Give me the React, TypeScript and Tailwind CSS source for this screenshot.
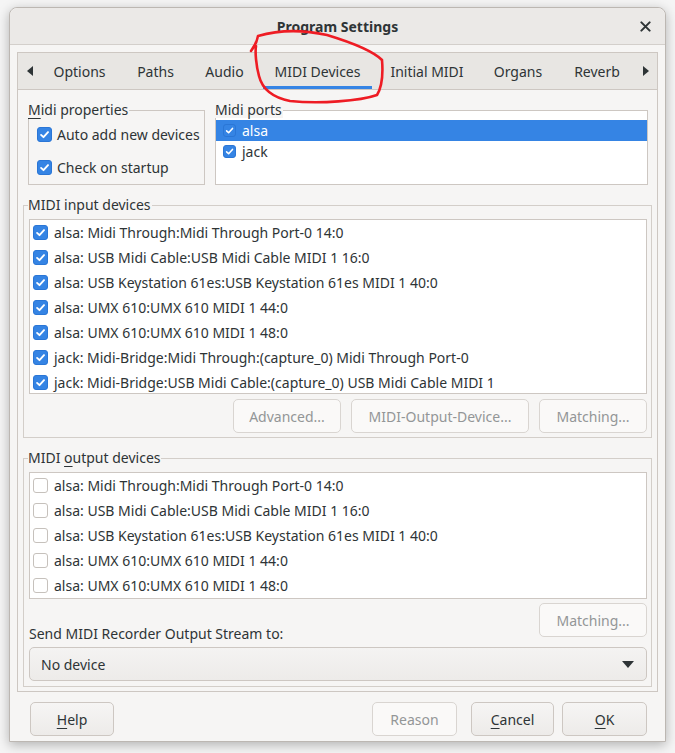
import React from "react";

const inputDevices = [
  "alsa: Midi Through:Midi Through Port-0 14:0",
  "alsa: USB Midi Cable:USB Midi Cable MIDI 1 16:0",
  "alsa: USB Keystation 61es:USB Keystation 61es MIDI 1 40:0",
  "alsa: UMX 610:UMX 610 MIDI 1 44:0",
  "alsa: UMX 610:UMX 610 MIDI 1 48:0",
  "jack: Midi-Bridge:Midi Through:(capture_0) Midi Through Port-0",
  "jack: Midi-Bridge:USB Midi Cable:(capture_0) USB Midi Cable MIDI 1",
];

const outputDevices = inputDevices.slice(0, 5);

const tabs = [
  { label: "Options", w: "w-[75px]" },
  { label: "Paths", w: "w-[61px]" },
  { label: "Audio", w: "w-[61px]" },
  { label: "MIDI Devices", w: "w-[109px]", active: true },
  { label: "Initial MIDI", w: "w-[94px]" },
  { label: "Organs", w: "w-[72px]" },
  { label: "Reverb", w: "w-[70px]" },
];

const Check: React.FC<{ on: boolean; small?: boolean }> = ({ on, small }) => {
  const size = small ? "w-[13px] h-[13px]" : "w-[15px] h-[15px]";
  if (!on) {
    return <span className={`${size} shrink-0 rounded-[3px] border border-[#c6c1bc] bg-white`} />;
  }
  return (
    <span className={`${size} shrink-0 rounded-[3px] bg-[#3584e4] border border-[#2a76d6] flex items-center justify-center`}>
      <svg viewBox="0 0 14 14" className="w-full h-full">
        <path d="M3.3 7.4 L5.9 9.9 L10.8 4.4" fill="none" stroke="white" strokeWidth="2" strokeLinecap="round" strokeLinejoin="round" />
      </svg>
    </span>
  );
};

const GroupTitle: React.FC<{ children: React.ReactNode }> = ({ children }) => (
  <div className="-mt-[9px] -ml-px flex h-[16px]">
    <span className="bg-[#f6f5f4] pr-px leading-[16px]">{children}</span>
  </div>
);

const Btn: React.FC<{ children: React.ReactNode; w: string; disabled?: boolean }> = ({ children, w, disabled }) => (
  <div
    className={`${w} h-[34px] shrink-0 rounded-[5px] border flex items-center justify-center ${
      disabled
        ? "border-[#d9d5d1] bg-[#faf9f8] text-[#939697]"
        : "border-[#cdc7c2] bg-gradient-to-b from-[#f6f5f4] to-[#edebe9] text-[#2e3436]"
    }`}
  >
    {children}
  </div>
);

const DeviceList: React.FC<{ items: string[]; checked: boolean; h: string }> = ({ items, checked, h }) => (
  <div className={`${h} border border-[#cdc7c2] bg-white overflow-hidden`}>
    {items.map((d) => (
      <div key={d} className="h-[25px] flex items-center gap-[6px] pl-[3px] whitespace-nowrap">
        <Check on={checked} />
        <span>{d}</span>
      </div>
    ))}
  </div>
);

export default function App() {
  return (
    <div
      className="w-[675px] h-[753px] bg-[#f5f5f5] overflow-hidden relative text-[14px] text-[#2e3436]"
      style={{ fontFamily: '"Noto Sans", "DejaVu Sans", sans-serif' }}
    >
      <div className="ml-[9px] mt-[7px] w-[657px] h-[735px] flex flex-col bg-[#f6f5f4] rounded-t-[8px] border border-[#bcb7b2] shadow-[0_3px_12px_rgba(0,0,0,0.28)]">
        {/* title bar */}
        <div className="h-[37px] shrink-0 rounded-t-[8px] bg-[#ebe9e7] border-b border-[#d3cfcb] flex items-center">
          <div className="w-[38px]" />
          <div className="flex-1 text-center font-bold text-[14px] leading-[20px] pt-[1px]">Program Settings</div>
          <div className="w-[38px] flex items-center justify-center">
            <svg viewBox="0 0 12 12" className="w-[11px] h-[11px] mr-[1px]">
              <path d="M1.5 1.5 L10.5 10.5 M10.5 1.5 L1.5 10.5" stroke="#2e3436" strokeWidth="2.2" strokeLinecap="round" />
            </svg>
          </div>
        </div>

        <div className="flex-1 px-[7px] pt-[7px] flex flex-col">
          {/* tab frame */}
          <div className="h-[640px] shrink-0 border border-[#cdc7c2] flex flex-col">
            <div className="h-[37px] shrink-0 bg-[#e8e6e3] border-b border-[#cdc7c2] flex">
              <div className="w-[24px] flex items-center justify-center">
                <svg viewBox="0 0 6 10" className="w-[6px] h-[10px]">
                  <path d="M6 0 L0 5 L6 10 Z" fill="#2e3436" />
                </svg>
              </div>
              <div className="flex gap-[8px]">
                {tabs.map((t) => (
                  <div
                    key={t.label}
                    className={`${t.w} h-[36px] flex items-center justify-center whitespace-nowrap ${
                      t.active ? "border-b-[3px] border-[#3584e4] pt-[3px]" : ""
                    }`}
                  >
                    {t.label}
                  </div>
                ))}
              </div>
              <div className="flex-1 flex items-center justify-center pl-[2px]">
                <svg viewBox="0 0 6 10" className="w-[6px] h-[10px]">
                  <path d="M0 0 L6 5 L0 10 Z" fill="#2e3436" />
                </svg>
              </div>
            </div>

            {/* page */}
            <div className="flex-1 px-[5px]">
              <div className="flex ml-[5px] mt-[20px]">
                <div className="w-[177px] h-[75px] border border-[#cdc7c2]">
                  <GroupTitle>
                    <span className="underline underline-offset-[3px]">M</span>idi properties
                  </GroupTitle>
                  <div className="h-[33px] flex items-center gap-[5px] pl-[8px]">
                    <Check on />
                    <span>Auto add new devices</span>
                  </div>
                  <div className="h-[32px] flex items-center gap-[5px] pl-[8px]">
                    <Check on />
                    <span>Check on startup</span>
                  </div>
                </div>
                <div className="ml-[10px] w-[433px] h-[75px] border border-[#cdc7c2] bg-white">
                  <GroupTitle>Midi ports</GroupTitle>
                  <div className="mt-[2px]">
                    <div className="h-[21px] flex items-center gap-[6px] pl-[7px] bg-[#3584e4] text-white">
                      <Check on small />
                      <span>alsa</span>
                    </div>
                    <div className="h-[21px] flex items-center gap-[6px] pl-[7px]">
                      <Check on small />
                      <span>jack</span>
                    </div>
                  </div>
                </div>
              </div>

              {/* MIDI input devices */}
              <div className="mt-[20px] border border-[#d3cec9] pl-[5px] pr-[4px] pb-[4px]">
                <GroupTitle>MIDI input devices</GroupTitle>
                <div className="mt-[6px]">
                  <DeviceList items={inputDevices} checked h="h-[175px]" />
                </div>
                <div className="mt-[5px] flex justify-end gap-[10px]">
                  <Btn w="w-[108px]" disabled>Advanced...</Btn>
                  <Btn w="w-[178px]" disabled>MIDI-Output-Device...</Btn>
                  <Btn w="w-[108px]" disabled>Matching...</Btn>
                </div>
              </div>

              {/* MIDI output devices */}
              <div className="mt-[20px] border border-[#d3cec9] pl-[5px] pr-[4px] pb-[5px]">
                <GroupTitle>
                  MIDI <span className="underline underline-offset-[3px]">o</span>utput devices
                </GroupTitle>
                <div className="mt-[6px]">
                  <DeviceList items={outputDevices} checked={false} h="h-[127px]" />
                </div>
                <div className="mt-[4px] flex justify-between items-start">
                  <span className="mt-[21px] leading-[20px]">Send MIDI Recorder Output Stream to:</span>
                  <Btn w="w-[108px]" disabled>Matching...</Btn>
                </div>
                <div className="mt-[3px] h-[34px] rounded-[5px] border border-[#cdc7c2] bg-gradient-to-b from-[#f4f3f2] to-[#edebe9] flex items-center pl-[11px] pr-[12px]">
                  <span className="flex-1">No device</span>
                  <svg viewBox="0 0 12 7" className="w-[12px] h-[7px]">
                    <path d="M0 0 L12 0 L6 7 Z" fill="#2e3436" />
                  </svg>
                </div>
              </div>
            </div>
          </div>

          {/* dialog buttons */}
          <div className="mt-[10px] flex">
            <div className="ml-[13px]">
              <Btn w="w-[84px]">
                <span>
                  <span className="underline underline-offset-[3px]">H</span>elp
                </span>
              </Btn>
            </div>
            <div className="flex-1" />
            <Btn w="w-[85px]" disabled>Reason</Btn>
            <div className="ml-[14px]">
              <Btn w="w-[83px]">
                <span>
                  <span className="underline underline-offset-[3px]">C</span>ancel
                </span>
              </Btn>
            </div>
            <div className="ml-[8px] mr-[11px]">
              <Btn w="w-[85px]">
                <span>
                  <span className="underline underline-offset-[3px]">O</span>K
                </span>
              </Btn>
            </div>
          </div>
        </div>
      </div>

      {/* red hand-drawn annotation */}
      <svg className="absolute left-0 top-0 pointer-events-none" width="675" height="753" viewBox="0 0 675 753">
        <path
          d="M251 51 C254 47 257 42 258 36 C275 31 300 29 327 35 C350 42 372 50 382 60 C383 72 383 85 377 95 C360 101 320 104 290 101 C270 97 262 88 259 76 C256 65 255 52 256 46"
          fill="none"
          stroke="#ee1c24"
          strokeWidth="2.6"
          strokeLinecap="round"
          strokeLinejoin="round"
        />
      </svg>
    </div>
  );
}
